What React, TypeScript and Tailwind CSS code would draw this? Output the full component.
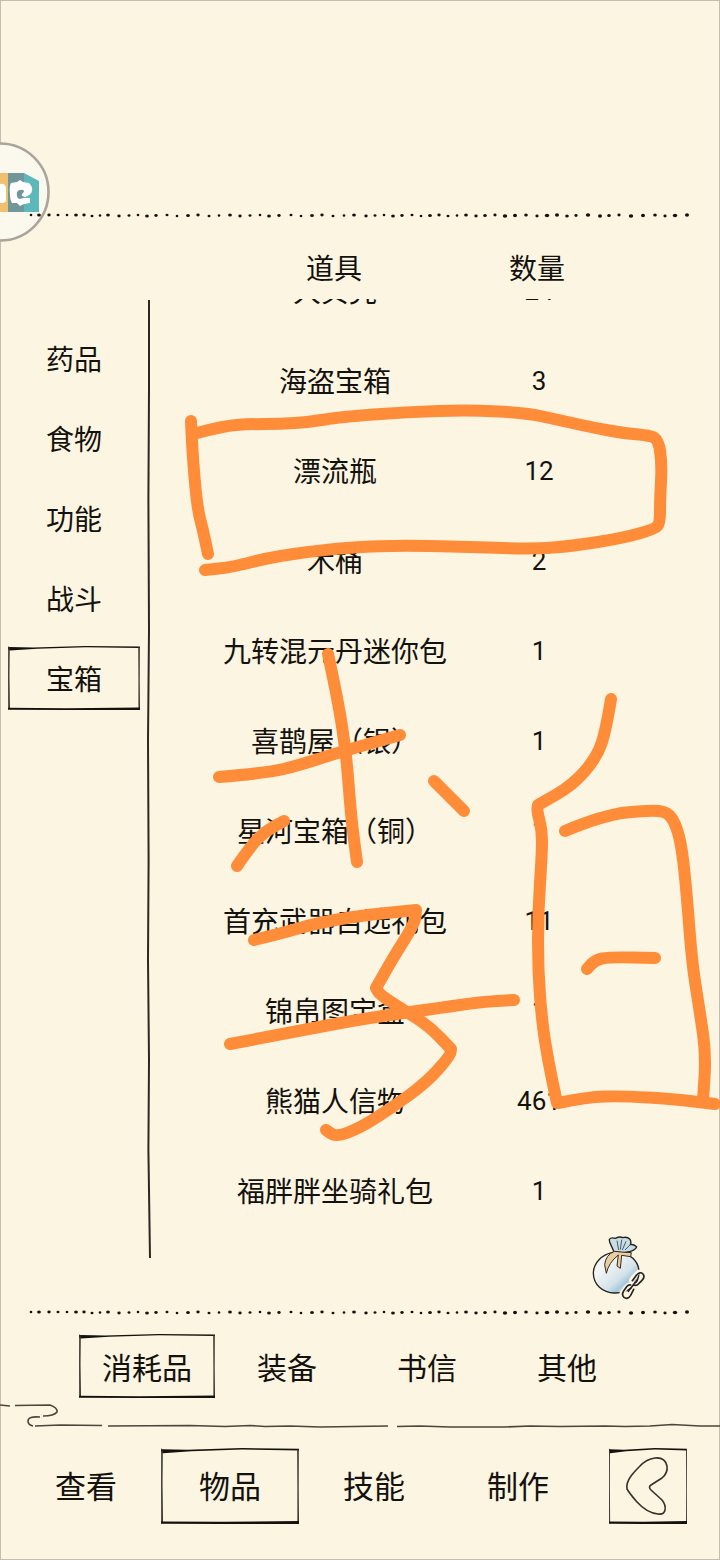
import { useState } from "react";

type Item = { name: string; count: number };
type Point = [number, number];

const categories = ["药品", "食物", "功能", "战斗", "宝箱"];
const subTabs = ["消耗品", "装备", "书信", "其他"];
const mainTabs = ["查看", "物品", "技能", "制作"];

const items: Item[] = [
  { name: "大贝壳", count: 24 },
  { name: "海盗宝箱", count: 3 },
  { name: "漂流瓶", count: 12 },
  { name: "木桶", count: 2 },
  { name: "九转混元丹迷你包", count: 1 },
  { name: "喜鹊屋（银）", count: 1 },
  { name: "星河宝箱（铜）", count: 1 },
  { name: "首充武器自选礼包", count: 11 },
  { name: "锦帛图宝盒", count: 1 },
  { name: "熊猫人信物", count: 461 },
  { name: "福胖胖坐骑礼包", count: 1 },
];

const dots = [
  31, 39, 49, 58, 67, 76, 84, 92, 100, 108, 119, 129, 138, 147, 156, 167, 177, 188, 198, 209, 219,
  230, 240, 250, 260, 269, 279, 291, 301, 312, 322, 333, 344, 354, 366, 375, 384, 393, 402, 412,
  421, 430, 439, 448, 457, 466, 476, 485, 495, 505, 515, 526, 537, 547, 557, 567, 576, 588, 600,
  609, 619, 631, 643, 655, 665, 675, 687,
];

// a point given twice makes a sharp corner
const strokes: Point[][] = [
  [[191, 421], [192, 447], [197, 507], [203, 530], [208, 554]],
  [
    [197, 433], [223, 426], [250, 424], [280, 424], [310, 422], [340, 417], [407, 412], [470, 410],
    [527, 413], [563, 421], [595, 428], [623, 433], [645, 435], [658, 438], [662, 463], [660, 500],
    [660, 523], [655, 529], [623, 538], [573, 546], [533, 549], [473, 547], [387, 545], [320, 550],
    [267, 558], [233, 567], [205, 570],
  ],
  [[328, 654], [338, 700], [346, 753], [349, 790], [352, 825], [357, 862]],
  [[219, 777], [267, 773], [300, 765], [340, 752], [400, 735]],
  [[237, 866], [250, 847], [264, 832], [284, 821]],
  [[434, 781], [464, 811]],
  [
    [254, 940], [283, 933], [313, 924], [357, 916], [416, 910], [416, 910], [415, 923], [393, 958],
    [376, 988], [376, 988], [380, 995], [407, 1012], [430, 1027], [451, 1049], [451, 1049],
    [450, 1056], [427, 1082], [393, 1107], [360, 1128], [336, 1137], [326, 1130],
  ],
  [[230, 1044], [287, 1033], [367, 1018], [440, 1008], [480, 1002], [514, 1000]],
  [
    [611, 699], [606, 730], [597, 757], [573, 785], [538, 805], [538, 805], [537, 811], [542, 830],
    [542, 853], [538, 913], [538, 970], [542, 1022], [548, 1060], [557, 1103],
  ],
  [
    [565, 831], [603, 815], [650, 810], [668, 812], [676, 825], [682, 848], [687, 897], [692, 963],
    [700, 1013], [706, 1055], [703, 1100],
  ],
  [[558, 1103], [587, 1097], [623, 1096], [673, 1099], [715, 1104]],
  [[587, 969], [594, 960], [610, 957], [655, 958]],
];

function toPath(points: Point[]) {
  let d = `M${points[0][0]} ${points[0][1]}`;
  for (let i = 1; i < points.length - 1; i++) {
    const [x, y] = points[i];
    const [nx, ny] = points[i + 1];
    d += ` Q${x} ${y} ${(x + nx) / 2} ${(y + ny) / 2}`;
  }
  const last = points[points.length - 1];
  return `${d} L${last[0]} ${last[1]}`;
}

function DottedLine() {
  return (
    <svg className="relative z-10 block h-3 w-full" viewBox="0 0 720 12" aria-hidden="true">
      {dots.map((x, i) => (
        <ellipse
          key={x}
          cx={x}
          cy={i < 6 ? 6 : 6 + ((i * 5) % 3) * 0.5}
          rx={1.3 + ((i * 7) % 4) * 0.2 + (x > 480 ? 0.3 : 0)}
          ry={1.2 + ((i * 3) % 4) * 0.12 + (x > 480 ? 0.2 : 0)}
          fill="#14120e"
        />
      ))}
    </svg>
  );
}

function InkFrame() {
  return (
    <svg
      className="absolute inset-0 h-full w-full"
      viewBox="0 0 136 64"
      preserveAspectRatio="none"
      aria-hidden="true"
    >
      <path d="M0 0.5 L1.5 1 L26 1.4 L80 0 L136 0.6 L136 2 L80 1.3 L30 2.8 L2 4.4 L0 3.4Z" fill="#14120e" />
      <path d="M0.2 1 L1.8 1 L1.5 30 L2 63 L0.2 63 L0.1 30Z" fill="#35322b" />
      <path d="M134.2 1 L135.8 1 L135.7 35 L136 63 L134.4 63 L134.4 35Z" fill="#35322b" />
      <path d="M0 61.8 L60 62.2 L136 61.4 L136 64 L60 64 L0 63.8Z" fill="#14120e" />
    </svg>
  );
}

type TabProps = { label: string; active: boolean; onSelect: () => void; className: string };

function Tab({ label, active, onSelect, className }: TabProps) {
  return (
    <button
      type="button"
      aria-pressed={active}
      onClick={onSelect}
      className={`relative flex shrink-0 items-center justify-center whitespace-nowrap leading-none ${className}`}
    >
      {active && <InkFrame />}
      <span>{label}</span>
    </button>
  );
}

function FloatingBall() {
  return (
    <svg className="absolute top-[141px] left-0 h-[102px] w-[51px]" viewBox="0 0 51 102" aria-hidden="true">
      <circle cx="0" cy="51" r="48.500" fill="#fbf8ee" stroke="#aaa49d" strokeWidth="2.6" />
      <path d="M0 32 H8 V71 H0Z" fill="#f0c06f" />
      <path d="M8 32 H24 V71 H8Z" fill="#71979a" />
      <path d="M24 32 L39 40 V71 H24Z" fill="#5db8ba" />
      <path d="M0 43 Q5 42 6 47 L6 60 Q5 62 0 62Z" fill="#fff" />
      <path
        d="M11 42 L17 41 L20 39 L23 41 L29 42 Q33 46 32 50 Q31 54 25 56 L22 55 Q21 53 23 52 Q25 50 23 49 Q19 48 17 51 Q16 56 19 58 L24 57 L30 57 L30 62 L24 63 L20 65 L17 62 L12 62 Q10 59 10 53 Q9 46 11 42Z"
        fill="#fff"
      />
    </svg>
  );
}

function BagIcon() {
  return (
    <svg className="h-16 w-[54px]" viewBox="66 46 162 192" aria-hidden="true">
      <defs>
        <linearGradient id="bag" x1="0" y1="0" x2="1" y2="1">
          <stop offset="0.3" stopColor="#f3f5f3" />
          <stop offset="0.6" stopColor="#d5e3eb" />
          <stop offset="0.72" stopColor="#a9c8dc" />
          <stop offset="0.9" stopColor="#e8f0f2" />
        </linearGradient>
      </defs>
      <path
        d="M128 95 C95 102 71 126 70 157 C70 192 98 216 133 217 C176 218 207 191 207 155 C207 123 185 106 160 96Z"
        fill="url(#bag)"
        stroke="#24231f"
        strokeWidth="4"
      />
      <path
        d="M131 92 C128 80 116 66 118 56 Q124 49 136 53 Q150 46 158 51 Q171 47 179 55 Q185 63 181 72 Q190 70 200 78 Q196 88 181 92 L160 97Z"
        fill="#c8dce6"
        stroke="#24231f"
        strokeWidth="4"
        strokeLinejoin="round"
      />
      <path d="M141 60 L146 88 M155 57 L151 87 M168 62 L157 88 M181 72 L165 88" fill="none" stroke="#4d5b65" strokeWidth="3" />
      <path
        d="M133 92 Q107 103 104 132 L109 158 Q116 126 145 103 L141 136 L151 143 L155 104 L182 108 L184 96 L154 94Z"
        fill="#e9cda0"
        stroke="#302a20"
        strokeWidth="3"
        strokeLinejoin="round"
      />
      <g fill="none" strokeLinecap="round">
        <g stroke="#fcf5e2" strokeWidth="14">
          <rect x="181" y="161" width="46" height="26" rx="13" transform="rotate(-47 204 174)" />
          <rect x="151" y="201" width="46" height="26" rx="13" transform="rotate(-52 174 214)" />
        </g>
        <g stroke="#24231f" strokeWidth="5">
          <path d="M187 180 L199 164 Q210 151 219 160 Q226 169 216 179 L204 191 Q198 196 191 193" />
          <path d="M191 206 L182 224 Q173 238 162 230 Q154 222 161 211 L171 197 Q176 191 182 193" />
          <path d="M175 212 L202 177" />
        </g>
      </g>
    </svg>
  );
}

export default function App() {
  const [category, setCategory] = useState("宝箱");
  const [subTab, setSubTab] = useState("消耗品");
  const [mainTab, setMainTab] = useState("物品");

  return (
    <main className="relative flex min-h-screen w-full flex-col overflow-hidden bg-[#fcf5e2] pt-[209px] font-['Noto_Sans_CJK_SC',sans-serif] text-[#14120e] shadow-[inset_0_0_0_1px_#c4beb1]">
      <FloatingBall />
      <DottedLine />

      <section className="flex pt-7">
        <nav aria-label="分类" className="mt-[77px] ml-2 flex w-[132px] shrink-0 flex-col gap-4">
          {categories.map((label) => (
            <Tab
              key={label}
              label={label}
              active={label === category}
              onSelect={() => setCategory(label)}
              className="h-16 text-[28px]"
            />
          ))}
        </nav>

        <svg
          className="mt-[51px] mb-10 ml-1 h-[960px] w-3 shrink-0"
          viewBox="0 0 12 960"
          preserveAspectRatio="none"
          aria-hidden="true"
        >
          <path
            d="M5 0 L5 90 L4.400 200 L5 330 L4 440 L4.600 560 L4 660 L5 760 L4.400 850 L6 958"
            fill="none"
            stroke="#2c2922"
            strokeWidth="2"
          />
        </svg>

        <div className="flex flex-1 flex-col pl-11">
          <table className="block">
            <thead className="block pb-3.5 text-[28px] leading-9">
              <tr className="grid grid-cols-[268px_138px]">
                <th scope="col" className="font-normal">道具</th>
                <th scope="col" className="font-normal">数量</th>
              </tr>
            </thead>
            {/* scrolled to the end, so the first row is cut off at the top */}
            <tbody className="flex h-[937px] flex-col justify-end overflow-hidden">
              {items.map((item) => (
                <tr key={item.name} className="grid h-[90px] shrink-0 grid-cols-[270px_138px] items-center text-center">
                  <td className="pb-0.5 text-[28px] leading-9 whitespace-nowrap">{item.name}</td>
                  <td className="font-[Roboto,sans-serif] text-[26px] leading-9">{item.count}</td>
                </tr>
              ))}
            </tbody>
          </table>
          <button type="button" aria-label="背包" className="ml-[392px] w-[54px]">
            <BagIcon />
          </button>
        </div>
      </section>

      <div className="pt-1.5">
        <DottedLine />
      </div>

      <nav aria-label="物品类型" className="flex gap-1 pt-4 pl-[79px]">
        {subTabs.map((label) => (
          <Tab
            key={label}
            label={label}
            active={label === subTab}
            onSelect={() => setSubTab(label)}
            className="h-16 w-[136px] text-[30px]"
          />
        ))}
      </nav>

      <svg className="block h-8 w-full" viewBox="0 0 720 32" preserveAspectRatio="none" aria-hidden="true">
        <g fill="none" stroke="#4a463d" strokeWidth="1.6">
          <path d="M0 7 L10 8 M15 7.500 L50 7 Q58 10 57 14 Q54 18 43 18" />
          <path d="M40 19 Q28 18 28 23 Q28 27 33 28" />
          <path d="M35 28 L60 27 L102 27.500 M108 28 L190 27.500 L225 28.500 L250 27.500 L265 28.500 L290 28 L320 29 L388 28" />
          <path d="M397 28.500 L420 28 L450 29 L505 29 L530 28 L560 28.500 L605 28 L625 28.500 L650 28 L672 26.500 L700 28 L720 28" />
        </g>
      </svg>

      <nav aria-label="主菜单" className="flex gap-1.5 pt-[18px] pr-[33px] pb-9 pl-[17px]">
        {mainTabs.map((label) => (
          <Tab
            key={label}
            label={label}
            active={label === mainTab}
            onSelect={() => setMainTab(label)}
            className="h-[76px] w-[138px] pb-1 text-[31px]"
          />
        ))}
        <button type="button" aria-label="返回" className="relative ml-auto h-[76px] w-[78px]">
          <InkFrame />
          <svg className="absolute inset-0 h-full w-full" viewBox="0 0 78 76" aria-hidden="true">
            <path
              d="M30 19 Q37 11 46 10 Q56 9 58 18 Q59 25 53 30 L42 37 Q39 39 42 42 L53 52 Q57 57 56 62 Q55 67 49 66 Q38 65 28 54 Q21 46 18 41 Q17 35 22 28 Q25 24 30 19Z"
              fill="none"
              stroke="#35322b"
              strokeWidth="1.6"
            />
          </svg>
        </button>
      </nav>

      <svg
        className="pointer-events-none absolute inset-0 z-20 h-full w-full"
        viewBox="0 0 720 1560"
        aria-hidden="true"
      >
        <g fill="none" stroke="#ff8c38" strokeWidth="12" strokeLinecap="round" strokeLinejoin="round">
          {strokes.map((points, i) => (
            <path key={i} d={toPath(points)} />
          ))}
        </g>
      </svg>
    </main>
  );
}
